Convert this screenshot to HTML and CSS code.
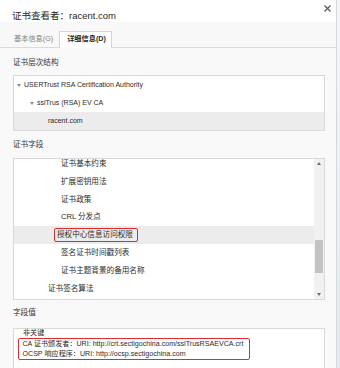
FILE: index.html
```html
<!DOCTYPE html>
<html lang="zh-CN">
<head>
<meta charset="utf-8">
<title>证书查看者</title>
<link rel="stylesheet" href="styles.css">
</head>
<body>
<div class="window">
  <div class="dialog">
    <header class="titlebar">
      <span class="title">证书查看者：racent.com</span>
      <svg class="close" width="7" height="7" viewBox="0 0 7 7" aria-label="关闭"><path d="M0.5 0.5L6.5 6.5M6.5 0.5L0.5 6.5" stroke="#555" stroke-width="1.2" fill="none"/></svg>
    </header>
    <nav class="tabs">
      <div class="tab">基本信息(G)</div>
      <div class="tab active">详细信息(D)</div>
    </nav>
    <main class="content">
      <div class="label">证书层次结构</div>
      <ul class="tree">
        <li class="node lvl1"><span class="caret"></span>USERTrust RSA Certification Authority</li>
        <li class="node lvl2"><span class="caret"></span>sslTrus (RSA) EV CA</li>
        <li class="node lvl3 selected">racent.com</li>
      </ul>
      <div class="label gap-fields">证书字段</div>
      <div class="fields">
        <div class="field-viewport">
          <ul class="field-list">
            <li class="field sub">证书基本约束</li>
            <li class="field sub">扩展密钥用法</li>
            <li class="field sub">证书政策</li>
            <li class="field sub">CRL 分发点</li>
            <li class="field sub selected"><span class="mark">授权中心信息访问权限</span></li>
            <li class="field sub">签名证书时间戳列表</li>
            <li class="field sub">证书主题背景的备用名称</li>
            <li class="field">证书签名算法</li>
          </ul>
        </div>
        <div class="scrollbar">
          <span class="arrow up"></span>
          <div class="track"><div class="thumb"></div></div>
          <span class="arrow down"></span>
        </div>
      </div>
      <div class="label gap-value">字段值</div>
      <div class="value">
        <div class="line first">非关键</div>
        <div class="mark-block">
          <div class="line">CA 证书颁发者：URI: http://crt.sectigochina.com/sslTrusRSAEVCA.crt</div>
          <div class="line">OCSP 响应程序：URI: http://ocsp.sectigochina.com</div>
        </div>
      </div>
    </main>
  </div>
  <div class="edge"></div>
</div>
</body>
</html>
```
FILE: styles.css
```css
* { box-sizing: border-box; }
html, body { margin: 0; padding: 0; }
body {
  background: #fff;
  font-family: "Liberation Sans", "Noto Sans CJK SC", sans-serif;
  font-size: 7.6px;
  color: #2b2b2b;
}
ul { list-style: none; margin: 0; padding: 0; }

.window {
  display: flex;
  width: 340px;
  height: 368px;
  overflow: hidden;
}
.dialog {
  width: 336px;
  height: 368px;
  display: flex;
  flex-direction: column;
  background: #f9f9f9;
  overflow: hidden;
}
.edge {
  width: 4px;
  border-left: 1px solid #d8d8d8;
  background: linear-gradient(#f4f6fa, #e3eaf5);
}

/* title */
.titlebar {
  height: 22px;
  flex: none;
  background: #fff;
  display: flex;
  align-items: flex-end;
  padding: 0 5px 0 12px;
}
.title {
  font-size: 9.5px;
  line-height: 13px;
  color: #1f1f1f;
}
.close {
  margin-left: auto;
  align-self: flex-start;
  margin-top: 5px;
}

/* tabs */
.tabs {
  height: 26px;
  flex: none;
  display: flex;
  align-items: flex-end;
  padding-left: 7px;
  border-bottom: 1px solid #dadada;
  background: #f8f8f8;
  font-size: 7.2px;
}
.tab {
  height: 16px;
  line-height: 14px;
  padding: 0 5px 0 6px;
  color: #808080;
  border: 1px solid transparent;
  border-bottom: none;
}
.tab.active {
  background: #fff;
  border-color: #d6d6d6;
  color: #1f1f1f;
  font-weight: bold;
  margin-bottom: -1px;
  height: 17px;
  padding: 0 5px 0 7px;
}

/* content */
.content {
  flex: 1;
  display: flex;
  flex-direction: column;
  padding: 9px 11px 0 13px;
  min-height: 0;
}
.label {
  line-height: 12px;
  color: #333;
}
.gap-fields { margin-top: 8px; }
.gap-value { margin-top: 7px; }

.tree {
  margin-top: 6px;
  background: #fff;
  border: 1px solid #d9d9d9;
  font-size: 7px;
}
.node {
  height: 18px;
  line-height: 18px;
  display: flex;
  align-items: center;
  white-space: nowrap;
}
.node.lvl1 { padding-left: 3px; }
.node.lvl2 { padding-left: 16px; }
.node.lvl3 { padding-left: 34px; }
.caret {
  width: 0;
  height: 0;
  border-left: 2.5px solid transparent;
  border-right: 2.5px solid transparent;
  border-top: 3px solid #8a8a8a;
  margin-right: 3px;
}
.selected { background: #ececec; }

.fields {
  margin-top: 7px;
  height: 142px;
  flex: none;
  display: flex;
  background: #fff;
  border: 1px solid #d9d9d9;
}
.field-viewport {
  flex: 1;
  overflow: hidden;
}
.field-list { margin-top: -4px; }
.field {
  height: 17.8px;
  line-height: 17.8px;
  padding-left: 34px;
  white-space: nowrap;
}
.field.sub { padding-left: 47px; }
.field.selected { padding-left: 40px; }
.mark {
  display: inline-block;
  line-height: 12px;
  padding: 0 4px 0 2px;
  border: 1.5px solid #e22b2b;
  border-radius: 2px;
}

.scrollbar {
  width: 10px;
  flex: none;
  display: flex;
  flex-direction: column;
  align-items: center;
  background: #f1f1f1;
}
.arrow {
  width: 0;
  height: 0;
  border-left: 2.5px solid transparent;
  border-right: 2.5px solid transparent;
  margin: 3px 0;
}
.arrow.up { border-bottom: 3px solid #6d6d6d; }
.arrow.down { border-top: 3px solid #6d6d6d; }
.track {
  flex: 1;
  width: 100%;
  display: flex;
  justify-content: center;
}
.thumb {
  width: 8px;
  height: 33px;
  margin-top: 72px;
  background: #c3c3c3;
}

.value {
  margin-top: 9px;
  flex: 1;
  background: #fff;
  border: 1px solid #d9d9d9;
  border-bottom: none;
  padding-left: 9px;
  font-size: 7.1px;
}
.line {
  line-height: 10px;
  white-space: nowrap;
}
.line.first { margin-top: -1px; }
.mark-block {
  display: inline-block;
  margin-left: -5px;
  padding: 0 6px 0 3.5px;
  border: 1.5px solid #e22b2b;
  border-radius: 2px;
}
```
